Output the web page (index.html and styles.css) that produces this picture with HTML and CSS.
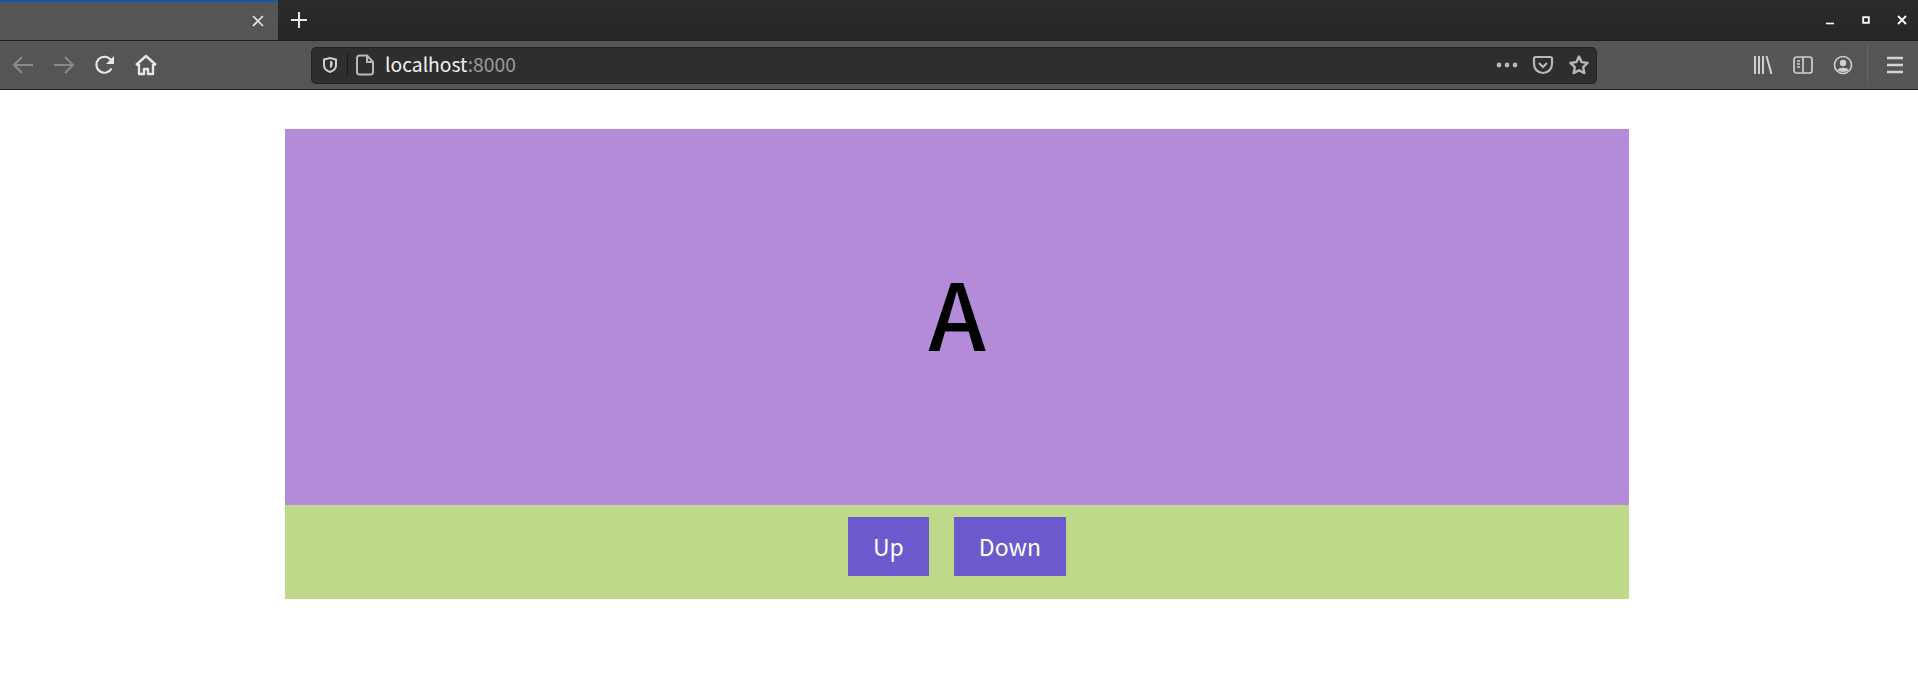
FILE: index.html
```html
<!DOCTYPE html>
<html lang="en">
<head>
    <meta charset="UTF-8">
    <title>localhost:8000</title>
    <link rel="stylesheet" href="styles.css">
</head>
<body>
    <div class="tabbar">
        <div class="tab">
            <svg class="tab-close" width="16" height="16" viewBox="0 0 16 16"><path d="M3 3l10 10M13 3L3 13" stroke="#e6e6e6" stroke-width="1.6" fill="none"/></svg>
        </div>
        <svg class="new-tab" width="20" height="20" viewBox="0 0 20 20"><path d="M10 2v16M2 10h16" stroke="#e8e8e8" stroke-width="2" fill="none"/></svg>
        <div class="window-controls">
            <svg width="10" height="10" viewBox="0 0 10 10"><path d="M1 8.5h8" stroke="#fff" stroke-width="1.6"/></svg>
            <svg width="10" height="10" viewBox="0 0 10 10"><rect x="2.2" y="2.2" width="5.6" height="5.6" fill="none" stroke="#fff" stroke-width="1.8"/></svg>
            <svg width="10" height="10" viewBox="0 0 10 10"><path d="M1 1l8 8M9 1L1 9" stroke="#fff" stroke-width="1.8" fill="none"/></svg>
        </div>
    </div>
    <div class="toolbar">
        <div class="nav-buttons">
            <svg width="24" height="24" viewBox="0 0 24 24"><path d="M22 12H3M11 4l-8 8 8 8" stroke="#8a8a8a" stroke-width="2" fill="none"/></svg>
            <svg width="24" height="24" viewBox="0 0 24 24"><path d="M2 12h19M13 4l8 8-8 8" stroke="#8a8a8a" stroke-width="2" fill="none"/></svg>
            <svg width="24" height="24" viewBox="0 0 24 24"><path d="M18.5 15.5A8 8 0 1 1 17.5 6.5L20 9" stroke="#e6e6e6" stroke-width="2.2" fill="none"/><path d="M21 3v8h-8z" fill="#e6e6e6"/></svg>
            <svg width="24" height="24" viewBox="0 0 24 24"><path d="M2 12L12 3l10 9M5 11v10h5v-5h4v5h5V11" stroke="#e6e6e6" stroke-width="2.400" fill="none" stroke-linejoin="round"/></svg>
        </div>
        <div class="urlbar">
            <svg width="18" height="18" viewBox="0 0 18 18"><path d="M9 2l6 1.500V9c0 3.500-3 6-6 7-3-1-6-3.500-6-7V3.500z" stroke="#cfcfcf" stroke-width="2" fill="none"/><path d="M9 5l2.500.6V9c0 1.500-1.300 2.700-2.500 3.200z" fill="#cfcfcf"/></svg>
            <div class="url-divider"></div>
            <svg width="20" height="22" viewBox="0 0 20 22"><path d="M2 4a2.500 2.500 0 0 1 2.500-2.500H12L18 8v10a2.500 2.500 0 0 1-2.500 2.500h-11A2.500 2.500 0 0 1 2 18zM12 1.500V8h6" stroke="#b8b8b8" stroke-width="2" fill="none"/></svg>
            <div class="url-text">localhost<span class="url-port">:8000</span></div>
            <svg class="url-more" width="22" height="6" viewBox="0 0 22 6"><circle cx="3" cy="3" r="2.400" fill="#b8b8b8"/><circle cx="11" cy="3" r="2.400" fill="#b8b8b8"/><circle cx="19" cy="3" r="2.400" fill="#b8b8b8"/></svg>
            <svg width="22" height="20" viewBox="0 0 22 20"><path d="M2 3.500A1.500 1.500 0 0 1 3.500 2h15A1.500 1.500 0 0 1 20 3.500V9a9 9 0 0 1-18 0z" stroke="#b8b8b8" stroke-width="2.200" fill="none"/><path d="M7 8l4 4 4-4" stroke="#b8b8b8" stroke-width="2.200" fill="none"/></svg>
            <svg width="22" height="22" viewBox="0 0 22 22"><path d="M11 2.500l2.600 5.600 6 .8-4.400 4.200 1.100 6L11 16.200l-5.300 2.900 1.100-6L2.400 8.900l6-.8z" stroke="#b8b8b8" stroke-width="2.400" fill="none" stroke-linejoin="round"/></svg>
        </div>
        <div class="tool-buttons">
            <svg width="20" height="20" viewBox="0 0 20 20"><path d="M2 1v18M6 1v18M10 1v18M13.500 1l5 18" stroke="#d0d0d0" stroke-width="2" fill="none"/></svg>
            <svg width="20" height="20" viewBox="0 0 20 20"><rect x="1" y="2" width="18" height="16" rx="2.500" stroke="#d0d0d0" stroke-width="1.700" fill="none"/><path d="M10 2v16M4 6h3M4 9h3M4 12h3" stroke="#d0d0d0" stroke-width="1.700" fill="none"/></svg>
            <svg width="20" height="20" viewBox="0 0 20 20"><circle cx="10" cy="10" r="8.500" stroke="#d0d0d0" stroke-width="1.600" fill="none"/><circle cx="10" cy="8" r="3.200" fill="#d0d0d0"/><path d="M4.500 15c1-3 10-3 11 0-2 2.500-9 2.500-11 0z" fill="#d0d0d0"/></svg>
            <div class="tool-divider"></div>
            <svg class="menu-icon" width="16" height="18" viewBox="0 0 16 18"><path d="M0 2h16M0 9h16M0 16h16" stroke="#d4d4d4" stroke-width="2.400" fill="none"/></svg>
        </div>
    </div>
    <div class="page">
        <div class="letter-box">A</div>
        <div class="button-bar">
            <button class="action-btn">Up</button>
            <button class="action-btn">Down</button>
        </div>
    </div>
</body>
</html>
```
FILE: styles.css
```css
* {
    margin: 0;
    padding: 0;
    box-sizing: border-box;
}
body {
    font-family: "Noto Sans CJK SC", "Noto Sans", sans-serif;
    background-color: white;
    height: 100vh;
    overflow: hidden;
}
.tabbar {
    height: 40px;
    background: linear-gradient(#2b2b2b, #262626);
    display: flex;
    align-items: center;
}
.tab {
    width: 278px;
    height: 40px;
    background-color: #555555;
    border-top: 2px solid #1457a8;
    display: flex;
    align-items: center;
    justify-content: flex-end;
    padding-right: 12px;
}
.new-tab {
    margin-left: 11px;
}
.window-controls {
    margin-left: auto;
    display: flex;
    gap: 26px;
    padding-right: 11px;
}
.toolbar {
    height: 50px;
    background-color: #555555;
    border-bottom: 1px solid #222;
    border-top: 1px solid #1e1e1e;
    display: flex;
    align-items: center;
}
.nav-buttons {
    width: 311px;
    padding-left: 11px;
    display: flex;
    gap: 17px;
    align-items: center;
}
.urlbar {
    width: 1286px;
    height: 37px;
    background-color: #2e2e2e;
    border: 1px solid #222;
    border-radius: 5px;
    display: flex;
    align-items: center;
    padding: 0 6px 0 9px;
}
.url-divider {
    width: 1px;
    height: 24px;
    background-color: #1c1c1c;
    margin: 0 7px 0 8px;
}
.url-text {
    color: #f2f2f2;
    font-size: 19.300px;
    margin-left: 10px;
    margin-bottom: 2px;
    flex: 1;
}
.url-port {
    color: #9a9a9a;
}
.url-more {
    margin-right: 14px;
}
.urlbar svg:last-child {
    margin-left: 14px;
}
.tool-buttons {
    flex: 1;
    display: flex;
    align-items: center;
    padding-left: 156px;
    gap: 20px;
}
.tool-divider {
    width: 1px;
    height: 42px;
    background-color: #626262;
    margin-left: -6px;
}
.menu-icon {
    margin-left: -1px;
}
.page {
    width: 1344px;
    margin-left: 285px;
    margin-top: 39px;
}
.letter-box {
    height: 376px;
    padding-bottom: 14px;
    background-color: #b38bd9;
    color: black;
    font-size: 92px;
    font-weight: 500;
    display: flex;
    align-items: center;
    justify-content: center;
}
.button-bar {
    height: 94px;
    background-color: #bfd98b;
    padding-top: 12px;
    display: flex;
    justify-content: center;
    gap: 25px;
    align-items: flex-start;
}
.action-btn {
    height: 59px;
    padding: 0 25px 2px;
    border: none;
    background-color: #6b5acd;
    color: white;
    font-family: "Noto Sans CJK SC", "Noto Sans", sans-serif;
    font-size: 23px;
}
```
